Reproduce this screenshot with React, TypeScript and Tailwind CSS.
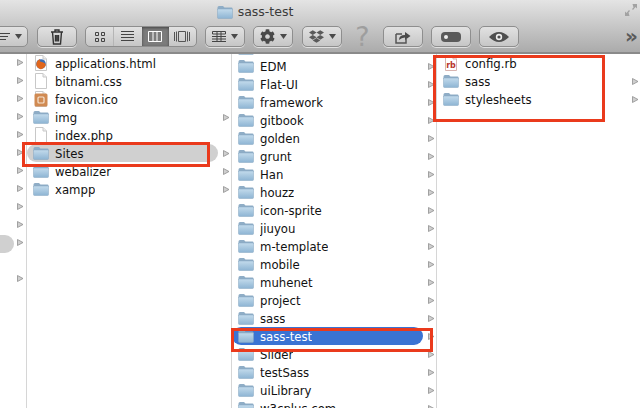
import { FaDropbox, FaCog } from "react-icons/fa";

const col0 = [63, 81, 99, 117, 135, 153, 171, 189, 207, 225, 243, 279];

const sitesFiles = [
  { name: "applications.html", icon: "firefox" },
  { name: "bitnami.css", icon: "file" },
  { name: "favicon.ico", icon: "ico" },
  { name: "img", icon: "folder", arrow: true },
  { name: "index.php", icon: "file" },
  { name: "Sites", icon: "folder", arrow: true, active: "gray" },
  { name: "webalizer", icon: "folder", arrow: true },
  { name: "xampp", icon: "folder", arrow: true },
];

const folders = [
  "", "EDM", "Flat-UI", "framework", "gitbook", "golden", "grunt", "Han", "houzz",
  "icon-sprite", "jiuyou", "m-template", "mobile", "muhenet", "project", "sass",
  "sass-test", "Slider", "testSass", "uiLibrary", "w3cplus.com",
];

const project = [
  { name: "config.rb", icon: "rb" },
  { name: "sass", icon: "folder", arrow: true },
  { name: "stylesheets", icon: "folder", arrow: true },
];

function Folder({ size = 16 }: { size?: number }) {
  return (
    <svg width={size} height={size} viewBox="0 0 16 16" className="shrink-0">
      <defs>
        <linearGradient id="fold" x1="0" y1="0" x2="0" y2="1">
          <stop offset="0" stopColor="#c3dbec" />
          <stop offset="1" stopColor="#8db4d3" />
        </linearGradient>
      </defs>
      <path d="M0.5 3.5 Q0.5 2 2 2 H6 L7.5 3.5 H14.5 Q15.5 3.5 15.5 4.5 V6 H0.5 Z" fill="#8fadc6" />
      <path d="M0.5 5 H15.5 V13.5 Q15.5 14.5 14.5 14.5 H1.5 Q0.5 14.5 0.5 13.5 Z" fill="url(#fold)" stroke="#86a6c0" strokeWidth="0.5" />
    </svg>
  );
}

function FileIcon({ kind }: { kind: string }) {
  if (kind === "folder") return <Folder />;
  return (
    <svg width="16" height="16" viewBox="0 0 16 16" className="shrink-0 -mt-px">
      <path d="M2.5 0.5 H10 L13.5 4 V15.5 H2.5 Z" fill="#fff" stroke={kind === "rb" ? "#d8b4b0" : "#c8c8c8"} />
      <path d="M10 0.5 V4 H13.5" fill="#eee" stroke={kind === "rb" ? "#d8b4b0" : "#c8c8c8"} />
      {kind === "firefox" && (
        <>
          <circle cx="8" cy="9" r="4.8" fill="#3d6fb5" />
          <path d="M3.5 11 Q2.5 6 7 4 Q6 7 9 7 Q13.5 8 12.5 11 Q10 15 7 14 Q5 13.5 3.5 11 Z" fill="#e0661c" />
        </>
      )}
      {kind === "ico" && (
        <>
          <rect x="1.5" y="2.5" width="13" height="13" rx="1.5" fill="#d08a52" />
          <rect x="5" y="6" width="6" height="6" rx="1" fill="none" stroke="#f6e4d2" strokeWidth="1.2" />
        </>
      )}
      {kind === "rb" && (
        <text x="8" y="13" textAnchor="middle" fontSize="8" fontWeight="700" fill="#b8352c" fontFamily="'DejaVu Sans', sans-serif">
          rb
        </text>
      )}
    </svg>
  );
}

function Arrow() {
  return (
    <svg width="7" height="7" viewBox="0 0 7 7" className="shrink-0">
      <path d="M0.5 0.5 L6 3.5 L0.5 6.5 Z" fill="#cfcfcf" stroke="#8f8f8f" strokeWidth="0.8" />
    </svg>
  );
}

function Row({
  name,
  icon,
  arrow,
  active,
}: {
  name: string;
  icon: string;
  arrow?: boolean;
  active?: string;
}) {
  const bg = active === "gray" ? "bg-[#d0d0d0]" : active === "blue" ? "bg-[#3a73d3] text-white" : "";
  return (
    <div className="relative flex h-[18px] items-center">
      <div className={`flex h-[18px] flex-1 items-center gap-[6px] rounded-full pl-[6px] ${bg}`}>
        <FileIcon kind={icon} />
        <span className="truncate pt-[3px]">{name}</span>
      </div>
      <div className="ml-[5px] flex w-[8px] shrink-0 justify-start">{arrow && <Arrow />}</div>
    </div>
  );
}

function Btn({ w = "w-10", children }: { w?: string; children: React.ReactNode }) {
  return (
    <div className={`flex h-[21px] ${w} shrink-0 items-center justify-center gap-[5px] rounded-[5px] border border-[#8e8e8e] bg-gradient-to-b from-[#e2e2e2] to-[#c6c6c6] shadow-[0_1px_0_#e0e0e0]`}>
      {children}
    </div>
  );
}

function Caret() {
  return (
    <svg width="7" height="5" viewBox="0 0 7 5">
      <path d="M0 0 H7 L3.5 5 Z" fill="#4a4a4a" />
    </svg>
  );
}

function Toolbar() {
  return (
    <div className="relative h-[54px] shrink-0 overflow-hidden border-b-2 border-[#8a8a8a] bg-gradient-to-b from-[#e4e4e4] to-[#ababab]">
      <div className="flex h-[23px] items-center justify-center gap-[5px] pr-[130px] pt-px text-[12.5px] text-[#3a3a3a]">
        <Folder size={16} />
        <span>sass-test</span>
      </div>

      <div className="flex items-center gap-2">
        <div className="-ml-3 flex h-[21px] w-10 shrink-0 items-center justify-end gap-[5px] rounded-[5px] border border-[#8e8e8e] bg-gradient-to-b from-[#e2e2e2] to-[#c6c6c6] pr-[5px]">
          <svg width="10" height="10" viewBox="0 0 10 10" stroke="#444" strokeWidth="1">
            <path d="M0 1.5 H10 M0 4.5 H8 M0 7.5 H6" />
          </svg>
          <Caret />
        </div>
        <div className="ml-px">
          <Btn>
            <svg width="14" height="16" viewBox="0 0 14 16" fill="none" stroke="#333" strokeWidth="1.4">
              <path d="M1 3 H13 M5 3 V1 H9 V3 M2.5 3 L3.5 15 H10.5 L11.5 3 M5.5 6 V12.5 M8.5 6 V12.5 M7 6 V12.5" />
            </svg>
          </Btn>
        </div>
        <div className="flex h-[21px] w-28 shrink-0 overflow-hidden rounded-[5px] border border-[#8e8e8e] bg-gradient-to-b from-[#e2e2e2] to-[#c6c6c6]">
          <div className="flex flex-1 items-center justify-center border-r border-[#b5b5b5]">
            <svg width="12" height="12" viewBox="0 0 12 12" fill="none" stroke="#444">
              <path d="M1.5 1.5 H4.5 V4.5 H1.5 Z M7.5 1.5 H10.5 V4.5 H7.5 Z M1.5 7.5 H4.5 V10.5 H1.5 Z M7.5 7.5 H10.5 V10.5 H7.5 Z" />
            </svg>
          </div>
          <div className="flex flex-1 items-center justify-center">
            <svg width="13" height="11" viewBox="0 0 13 11" stroke="#444">
              <path d="M0 0.5 H13 M0 3.5 H13 M0 6.5 H13 M0 9.5 H13" />
            </svg>
          </div>
          <div className="flex flex-1 items-center justify-center bg-[#7c7c7c] shadow-[inset_0_1px_3px_#444]">
            <svg width="14" height="11" viewBox="0 0 14 11" fill="none" stroke="#fff">
              <path d="M0.5 0.5 H13.5 V10.5 H0.5 Z M5 0.5 V10.5 M9 0.5 V10.5" />
            </svg>
          </div>
          <div className="flex flex-1 items-center justify-center">
            <svg width="16" height="11" viewBox="0 0 16 11" fill="none" stroke="#555">
              <path d="M0.5 1 V10 M2.5 0.5 V10.5 M13.5 0.5 V10.5 M15.5 1 V10" />
              <path d="M4.5 0.5 H11.5 V10.5 H4.5 Z" />
            </svg>
          </div>
        </div>
        <Btn>
          <svg width="14" height="11" viewBox="0 0 14 11" fill="none" stroke="#444">
            <path d="M0.5 0.5 H13.5 V3 H0.5 Z M0 5.5 H14 M0 8 H14 M0 10.5 H14 M5 0.5 V10.5 M9 0.5 V10.5" />
          </svg>
          <Caret />
        </Btn>
        <Btn>
          <FaCog className="text-[15px] text-[#4a4a4a]" />
          <Caret />
        </Btn>
        <div className="ml-px">
          <Btn>
            <FaDropbox className="text-[15px] text-[#5a5a5a]" />
            <Caret />
          </Btn>
        </div>
        <div className="flex w-[25px] shrink-0 justify-center text-[27px] leading-none text-[#9e9e9e]">?</div>
        <Btn>
          <svg width="16" height="14" viewBox="0 0 16 14" fill="none">
            <path d="M1 4 H7 M1 4 V13 H11 V9" stroke="#555" strokeWidth="1.5" />
            <path d="M4 10 Q4 5 10 5 V2 L15.5 6 L10 10 V7.5 Q6.5 7.5 4 10 Z" fill="#4a4a4a" />
          </svg>
        </Btn>
        <Btn>
          <svg width="20" height="10" viewBox="0 0 20 10">
            <rect width="20" height="10" rx="4" fill="#5a5a5a" />
            <circle cx="5" cy="5" r="2" fill="#eee" />
          </svg>
        </Btn>
        <Btn>
          <svg width="20" height="12" viewBox="0 0 20 12">
            <path d="M0 6 Q10 -4 20 6 Q10 16 0 6 Z" fill="#4f4f4f" />
            <circle cx="10" cy="6" r="3.2" fill="#eee" />
            <circle cx="10" cy="6" r="1.6" fill="#4f4f4f" />
          </svg>
        </Btn>
      </div>

      <svg width="14" height="14" viewBox="0 0 14 14" className="absolute right-[2px] top-[3px]" fill="#a2a2a2">
        <path d="M8 6 L13 1 V5.5 L11.5 4 L9 7 Z M8.5 1 H13 L9.5 4.5 Z M6 8 L1 13 V8.5 L2.5 10 L5 7 Z M5.5 13 H1 L4.5 9.5 Z" />
      </svg>
      <span className="absolute right-[2px] top-[26px] text-[20px] font-bold leading-[20px] text-[#5a5a5a]">»</span>
    </div>
  );
}

function Mark({ className }: { className: string }) {
  return <div className={`pointer-events-none absolute border-[3px] border-[#ea3a1c] ${className}`} />;
}

export default function App() {
  return (
    <div className="relative flex h-[408px] w-[640px] flex-col overflow-hidden bg-white font-['DejaVu_Sans',sans-serif] text-[11.7px] text-[#111]">
      <Toolbar />
      <div className="flex min-h-0 flex-1">
        <div className="relative w-[27px] shrink-0 border-r border-[#d6d6d6]">
          <div className="absolute left-0 top-[181px] h-[18px] w-[14px] rounded-r-full bg-[#d0d0d0]" />
          {col0.map((y) => (
            <div key={y} className="absolute left-[17px]" style={{ top: y - 58 }}>
              <Arrow />
            </div>
          ))}
        </div>
        <div className="w-[205px] shrink-0 border-r border-[#d6d6d6]">
          {sitesFiles.map((f) => (
            <Row key={f.name} {...f} />
          ))}
        </div>
        <div className="w-[205px] shrink-0 overflow-hidden border-r border-[#d6d6d6]">
          <div className="-mt-[15px]">
            {folders.map((name) => (
              <Row
                key={name}
                name={name}
                icon="folder"
                arrow
                active={name === "sass-test" ? "blue" : undefined}
              />
            ))}
          </div>
        </div>
        <div className="flex-1">
          {project.map((f) => (
            <Row key={f.name} {...f} />
          ))}
        </div>
      </div>
      <Mark className="left-[22px] top-[142px] h-[25px] w-[188px]" />
      <Mark className="left-[231px] top-[328px] h-[24px] w-[202px]" />
      <Mark className="left-[433px] top-[55px] h-[67px] w-[172px]" />
    </div>
  );
}
